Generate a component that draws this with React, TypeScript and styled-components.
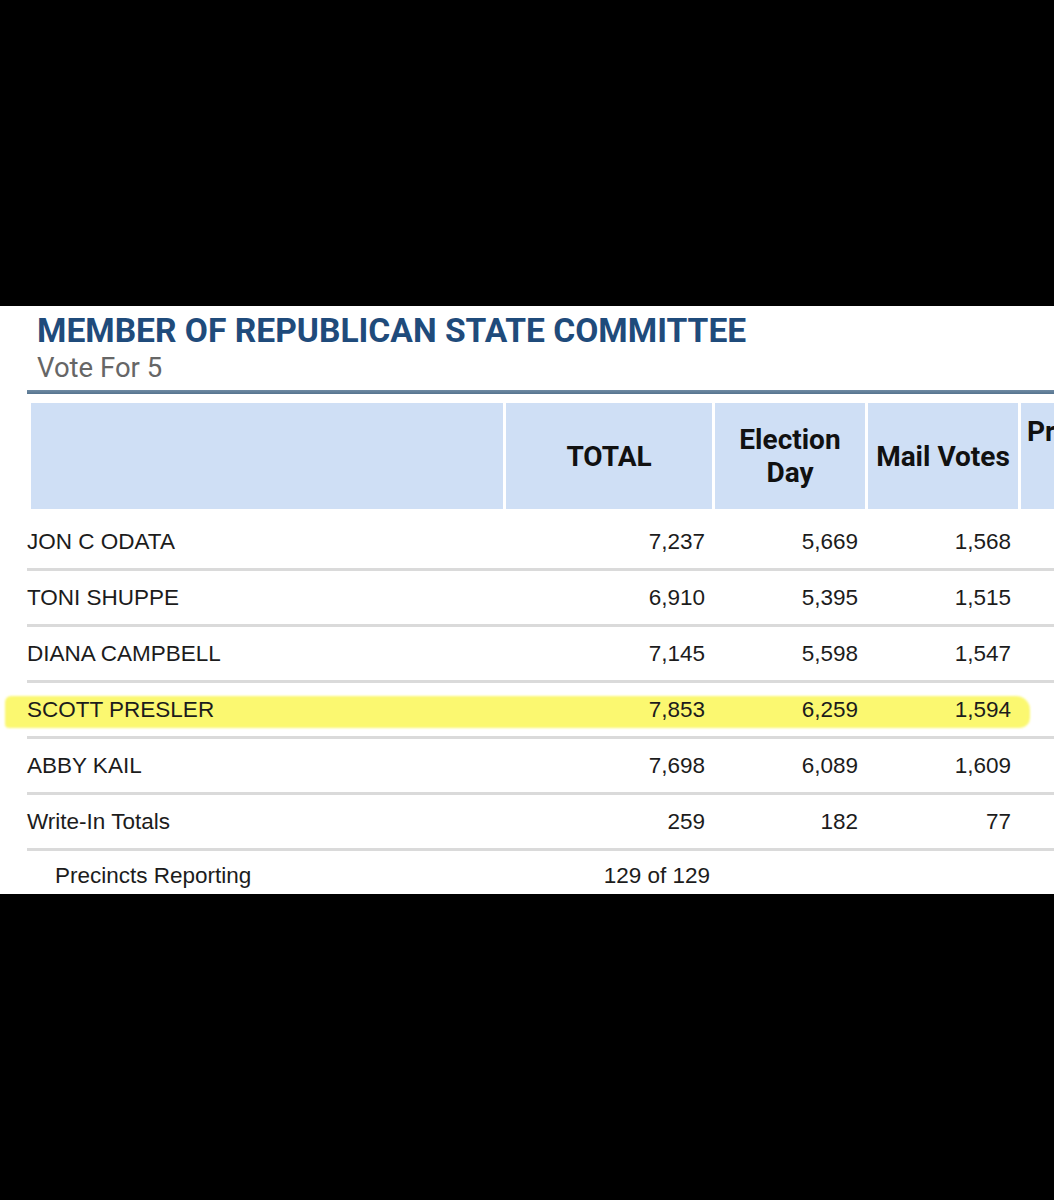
import styled, { createGlobalStyle, css } from 'styled-components'

const GlobalStyle = createGlobalStyle`
  html, body {
    margin: 0;
    padding: 0;
    background: #000;
  }
  body {
    width: 1054px;
    height: 1200px;
    overflow: hidden;
  }
`

type Row = {
  name: string
  total: string
  election: string
  mail: string
  marked?: boolean
}

const rows: Row[] = [
  { name: 'JON C ODATA', total: '7,237', election: '5,669', mail: '1,568' },
  { name: 'TONI SHUPPE', total: '6,910', election: '5,395', mail: '1,515' },
  { name: 'DIANA CAMPBELL', total: '7,145', election: '5,598', mail: '1,547' },
  { name: 'SCOTT PRESLER', total: '7,853', election: '6,259', mail: '1,594', marked: true },
  { name: 'ABBY KAIL', total: '7,698', election: '6,089', mail: '1,609' },
  { name: 'Write-In Totals', total: '259', election: '182', mail: '77' },
]

function App() {
  return (
    <>
      <GlobalStyle />
      <Page>
        <Panel>
          <Title>MEMBER OF REPUBLICAN STATE COMMITTEE</Title>
          <Subtitle>Vote For 5</Subtitle>
          <Rule />
          <Table>
            <HeaderRow>
              <HeadCell />
              <HeadCell>TOTAL</HeadCell>
              <HeadCell>
                Election
                <br />
                Day
              </HeadCell>
              <HeadCell>Mail Votes</HeadCell>
              <HeadCell $top>
                Provisional
                <br />
                Votes
              </HeadCell>
            </HeaderRow>
            {rows.map((r) => (
              <DataRow key={r.name} $marked={r.marked}>
                <Name>{r.name}</Name>
                <Num>{r.total}</Num>
                <Num>{r.election}</Num>
                <Num>{r.mail}</Num>
                <Num />
              </DataRow>
            ))}
            <FootRow>
              <FootLabel>Precincts Reporting</FootLabel>
              <FootValue>129 of 129</FootValue>
            </FootRow>
          </Table>
        </Panel>
      </Page>
    </>
  )
}

const Page = styled.div`
  height: 1200px;
  padding-top: 306px;
  box-sizing: border-box;
`

const Panel = styled.section`
  height: 588px;
  background: #fff;
  overflow: hidden;
  box-sizing: border-box;
  padding-top: 3px;
`

const Title = styled.h1`
  margin: 0 0 0 37px;
  font-family: Roboto, 'Liberation Sans', sans-serif;
  font-weight: 700;
  font-size: 33.6px;
  line-height: 44px;
  color: #1f4b7b;
  white-space: nowrap;
`

const Subtitle = styled.div`
  margin-left: 37px;
  font-family: Roboto, 'Liberation Sans', sans-serif;
  font-size: 27.5px;
  line-height: 30px;
  color: #666;
`

const Rule = styled.div`
  margin: 7px 0 0 27px;
  height: 4px;
  background: linear-gradient(#6f8aa3, #56748f);
`

const Table = styled.div`
  margin-left: 27px;
  margin-top: 9px;
  width: 1250px;
`

const columns = css`
  display: grid;
  grid-template-columns: 476px 206px 150px 150px 200px;
  column-gap: 3px;
`

const HeaderRow = styled.div`
  ${columns};
  grid-template-columns: 472px 206px 150px 150px 200px;
  padding-left: 4px;
  height: 106px;
  margin-bottom: 6px;
`

const HeadCell = styled.div<{ $top?: boolean }>`
  background: #cfdff5;
  display: flex;
  align-items: ${({ $top }) => ($top ? 'flex-start' : 'center')};
  justify-content: ${({ $top }) => ($top ? 'flex-start' : 'center')};
  padding: ${({ $top }) => ($top ? '12px 6px' : '0')};
  text-align: center;
  font-family: Roboto, 'Liberation Sans', sans-serif;
  font-weight: 700;
  font-size: 28px;
  line-height: 33px;
  color: #111;
  white-space: nowrap;
`

const DataRow = styled.div<{ $marked?: boolean }>`
  ${columns};
  position: relative;
  height: 53px;
  align-items: center;
  border-bottom: 3px solid #dadada;
  font-family: 'Liberation Sans', Arial, sans-serif;
  font-size: 22.5px;
  color: #1c1c1c;

  ${({ $marked }) =>
    $marked &&
    css`
      &::before {
        content: '';
        position: absolute;
        left: -22px;
        top: 13px;
        width: 1025px;
        height: 32px;
        background: #fbf870;
        border-radius: 6px 14px 10px 4px;
        filter: blur(1px);
      }
    `}

  > * {
    position: relative;
  }
`

const Name = styled.div`
  white-space: nowrap;
`

const Num = styled.div`
  text-align: right;
  padding-right: 7px;
`

const FootRow = styled.div`
  ${columns};
  height: 50px;
  align-items: center;
  font-family: 'Liberation Sans', Arial, sans-serif;
  font-size: 22.5px;
  color: #1c1c1c;
`

const FootLabel = styled.div`
  padding-left: 28px;
`

const FootValue = styled.div`
  text-align: right;
  padding-right: 2px;
`

export default App
